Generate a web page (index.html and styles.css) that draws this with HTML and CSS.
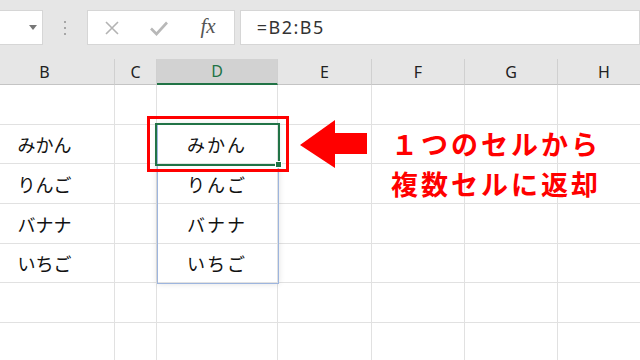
FILE: index.html
```html
<html lang="ja">
<head>
  <meta charset="UTF-8">
  <meta name="viewport" content="width=device-width">
  <title>返却</title>
  <link rel="stylesheet" href="styles.css">
</head>
<body>
<div class="page">

  <div class="toolbar">
    <div class="namebox"><span class="caret"></span></div>
    <div class="grip"><i></i><i></i><i></i></div>
    <div class="fxbuttons">
      <span class="btn">
        <svg width="16" height="16" viewBox="0 0 16 16"><path d="M2 2 L14 14 M14 2 L2 14" stroke="#b3b3b3" stroke-width="1.6" fill="none"/></svg>
      </span>
      <span class="btn">
        <svg width="20" height="16" viewBox="0 0 20 16"><path d="M2 8.5 L7.5 14 L18 2.5" stroke="#b8b8b8" stroke-width="2.6" fill="none"/></svg>
      </span>
      <span class="btn fx">fx</span>
    </div>
    <div class="formula">=B2:B5</div>
  </div>

  <div class="sheet">
    <div class="row head">
      <div class="cell colb">B</div><div class="cell colc">C</div><div class="cell cold on">D</div><div class="cell cole">E</div><div class="cell colf">F</div><div class="cell colg">G</div><div class="cell colh">H</div>
    </div>
    <div class="row r40">
      <div class="cell colb"></div><div class="cell colc"></div><div class="cell cold"></div><div class="cell cole"></div><div class="cell colf"></div><div class="cell colg"></div><div class="cell colh"></div>
    </div>
    <div class="row r39">
      <div class="cell colb">みかん</div><div class="cell colc"></div><div class="cell cold">みかん</div><div class="cell cole"></div><div class="cell colf"></div><div class="cell colg"></div><div class="cell colh"></div>
    </div>
    <div class="row r40">
      <div class="cell colb">りんご</div><div class="cell colc"></div><div class="cell cold">りんご</div><div class="cell cole"></div><div class="cell colf"></div><div class="cell colg"></div><div class="cell colh"></div>
    </div>
    <div class="row r40">
      <div class="cell colb">バナナ</div><div class="cell colc"></div><div class="cell cold">バナナ</div><div class="cell cole"></div><div class="cell colf"></div><div class="cell colg"></div><div class="cell colh"></div>
    </div>
    <div class="row r39">
      <div class="cell colb">いちご</div><div class="cell colc"></div><div class="cell cold">いちご</div><div class="cell cole"></div><div class="cell colf"></div><div class="cell colg"></div><div class="cell colh"></div>
    </div>
    <div class="row r40">
      <div class="cell colb"></div><div class="cell colc"></div><div class="cell cold"></div><div class="cell cole"></div><div class="cell colf"></div><div class="cell colg"></div><div class="cell colh"></div>
    </div>
    <div class="row r40">
      <div class="cell colb"></div><div class="cell colc"></div><div class="cell cold"></div><div class="cell cole"></div><div class="cell colf"></div><div class="cell colg"></div><div class="cell colh"></div>
    </div>
  </div>

  <!-- spill range, active cell and the annotation -->
  <div class="spill"></div>
  <div class="active"><span class="handle"></span></div>
  <div class="mark"></div>
  <svg class="arrow" width="70" height="50" viewBox="0 0 70 50">
    <polygon points="0,25 35,0 35,13 67,13 67,34 35,34 35,48" fill="#ff0000"/>
  </svg>
  <div class="note">１つのセルから<br>複数セルに返却</div>

</div>
</body>
</html>
```

FILE: styles.css
```css
body {
    margin: 0;
    background: #fff;
    font-family: "Noto Sans", "Noto Sans CJK JP", sans-serif;
}
.page {
    position: relative;
    width: 640px;
    height: 360px;
    overflow: hidden;
}

/* formula bar */
.toolbar {
    display: flex;
    align-items: flex-start;
    height: 59px;
    padding-top: 10px;
    box-sizing: border-box;
    background: #e6e6e6;
}
.namebox {
    position: relative;
    width: 44px;
    height: 35px;
    margin-left: -1px;
    background: #fff;
    border: 1px solid #d6d6d6;
    box-sizing: border-box;
}
.caret {
    position: absolute;
    left: 29px;
    top: 14px;
    border-left: 4px solid transparent;
    border-right: 4px solid transparent;
    border-top: 5px solid #777;
}
.grip {
    width: 44px;
    height: 35px;
    display: flex;
    flex-direction: column;
    align-items: center;
    justify-content: center;
    gap: 4px;
}
.grip i {
    width: 2px;
    height: 2px;
    background: #a6a6a6;
}
.fxbuttons {
    display: flex;
    width: 148px;
    height: 35px;
    background: #fff;
    border: 1px solid #d6d6d6;
    box-sizing: border-box;
}
.btn {
    display: flex;
    align-items: center;
    justify-content: center;
    width: 49px;
}
.btn + .btn {
    width: 47px;
}
.fx {
    width: 52px !important;
    font-family: "Liberation Serif", serif;
    font-style: italic;
    font-size: 21px;
    color: #555;
    padding-bottom: 2px;
}
.formula {
    width: 402px;
    height: 35px;
    margin-left: 5px;
    padding-left: 16px;
    background: #fff;
    border: 1px solid #d6d6d6;
    box-sizing: border-box;
    font-size: 18px;
    letter-spacing: 1.5px;
    line-height: 33px;
    color: #333;
}

/* grid */
.row {
    display: flex;
}
.cell {
    height: 100%;
    box-sizing: border-box;
    border-right: 1px solid #e1e1e1;
    border-bottom: 1px solid #e1e1e1;
    display: flex;
    align-items: center;
    justify-content: center;
    font-size: 18px;
    color: #111;
    flex: none;
}
.r40 { height: 40px; }
.r39 { height: 39px; }
.colb { width: 115px; padding-right: 25px; }
.colc { width: 42px; }
.cold { width: 121px; letter-spacing: 2px; }
.cole { width: 94px; }
.colf { width: 93px; }
.colg { width: 93px; }
.colh { width: 93px; }

.head {
    height: 26px;
}
.head .cell {
    background: #e6e6e6;
    border-right: 1px solid #d0d0d0;
    border-bottom: 1px solid #c4c4c4;
    font-size: 16px;
    color: #222;
    letter-spacing: 0;
}
.head .on {
    background: #d2d2d2;
    color: #217346;
    border-bottom: 2px solid #217346;
}

/* overlays */
.spill {
    position: absolute;
    left: 157px;
    top: 124px;
    width: 122px;
    height: 160px;
    box-sizing: border-box;
    border: 1px solid #9db5de;
    box-shadow: 0 0 6px rgba(0, 0, 0, 0.12);
}
.active {
    position: absolute;
    left: 155px;
    top: 123px;
    width: 125px;
    height: 43px;
    box-sizing: border-box;
    border: 2px solid #217346;
}
.handle {
    position: absolute;
    right: -4px;
    bottom: -4px;
    width: 5px;
    height: 5px;
    background: #217346;
    border: 1px solid #fff;
}
.mark {
    position: absolute;
    left: 147px;
    top: 116px;
    width: 142px;
    height: 56px;
    box-sizing: border-box;
    border: 3px solid #ff0000;
}
.arrow {
    position: absolute;
    left: 300px;
    top: 120px;
}
.note {
    position: absolute;
    left: 391px;
    top: 124px;
    font-family: "Noto Sans CJK JP", sans-serif;
    font-weight: 700;
    font-size: 27px;
    letter-spacing: 3px;
    line-height: 40px;
    color: #ff0000;
}
```
